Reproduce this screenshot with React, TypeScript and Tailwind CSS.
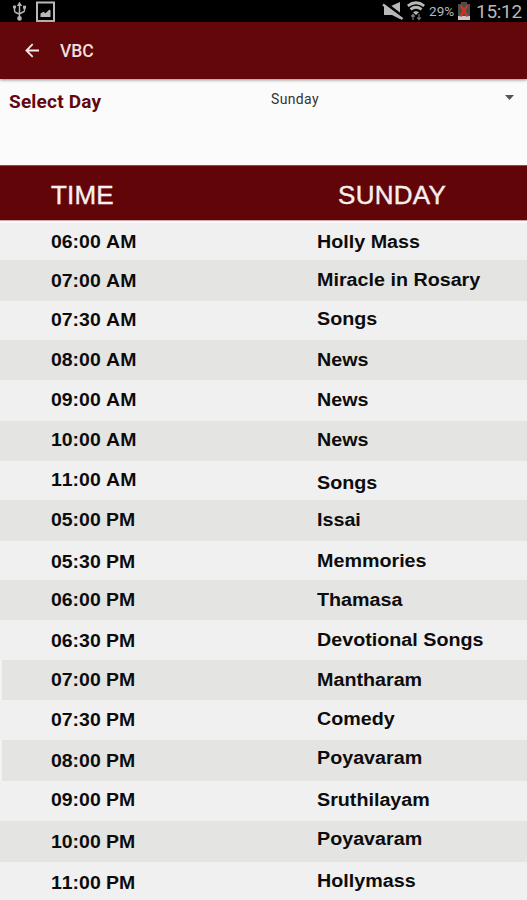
import React from 'react';

interface Programme {
  time: string;
  show: string;
  // row height and text offsets from the top of the row
  height: number;
  timeTop: number;
  showTop: number;
  inset?: boolean;
}

const programmes: Programme[] = [
  { time: '06:00 AM', show: 'Holly Mass', height: 37, timeTop: 10, showTop: 10 },
  { time: '07:00 AM', show: 'Miracle in Rosary', height: 41, timeTop: 12, showTop: 11 },
  { time: '07:30 AM', show: 'Songs', height: 39, timeTop: 10, showTop: 9 },
  { time: '08:00 AM', show: 'News', height: 40, timeTop: 11, showTop: 11 },
  { time: '09:00 AM', show: 'News', height: 41, timeTop: 11, showTop: 11 },
  { time: '10:00 AM', show: 'News', height: 40, timeTop: 10, showTop: 10 },
  { time: '11:00 AM', show: 'Songs', height: 39, timeTop: 10, showTop: 13 },
  { time: '05:00 PM', show: 'Issai', height: 41, timeTop: 11, showTop: 11 },
  { time: '05:30 PM', show: 'Memmories', height: 39, timeTop: 12, showTop: 11 },
  { time: '06:00 PM', show: 'Thamasa', height: 40, timeTop: 11, showTop: 11 },
  { time: '06:30 PM', show: 'Devotional Songs', height: 40, timeTop: 12, showTop: 11 },
  { time: '07:00 PM', show: 'Mantharam', height: 40, timeTop: 11, showTop: 11, inset: true },
  { time: '07:30 PM', show: 'Comedy', height: 40, timeTop: 11, showTop: 10 },
  { time: '08:00 PM', show: 'Poyavaram', height: 41, timeTop: 12, showTop: 9, inset: true },
  { time: '09:00 PM', show: 'Sruthilayam', height: 40, timeTop: 10, showTop: 10 },
  { time: '10:00 PM', show: 'Poyavaram', height: 41, timeTop: 12, showTop: 9 },
  { time: '11:00 PM', show: 'Hollymass', height: 38, timeTop: 12, showTop: 10 },
];

const StatusBar = () => (
  <div className="flex h-[22px] items-center justify-between bg-black pr-[5px] pl-3">
    <div className="flex items-center gap-[9px]">
      <svg width="15" height="20" viewBox="0 0 15 20" fill="none" stroke="#b4b4b4" strokeWidth="1.5">
        <path d="M7.5 3v14M2.5 6.5v3.2q0 1.3 1.3 1.8l3.7 1.7M12.5 7v2.2q0 1.3-1.3 1.8l-3.7 1.7" />
        <path d="M7.5 0.8L4.8 5h5.4z" fill="#b4b4b4" stroke="none" />
        <circle cx="7.5" cy="17.4" r="2.3" fill="#b4b4b4" stroke="none" />
        <circle cx="2.5" cy="6" r="1.7" fill="#b4b4b4" stroke="none" />
        <path d="M11 4.7h3v3h-3z" fill="#b4b4b4" stroke="none" />
      </svg>
      <svg width="19" height="21" viewBox="0 0 19 21">
        <rect x="1" y="1.5" width="17" height="18.5" fill="none" stroke="#b9b9b9" strokeWidth="2" />
        <path d="M4.5 16v-3.5l3-1.8 2 1.5 4-3.7 1 1V16z" fill="#b9b9b9" />
      </svg>
    </div>
    <div className="flex items-center font-[Roboto,sans-serif] text-[#b8b8b8]">
      <svg width="22" height="20" viewBox="0 0 22 20">
        <path d="M2 5h7l9-4v17l-8-4H2z" fill="#b9b9b9" />
        <path d="M2 2l18 14" stroke="#000" strokeWidth="4.5" />
        <path d="M1 3.5l19.5 14.5" stroke="#b9b9b9" strokeWidth="2.2" />
      </svg>
      <svg className="ml-[3px]" width="18" height="20" viewBox="0 0 18 20" fill="none" stroke="#b9b9b9" strokeWidth="2.8">
        <path d="M0.8 4.8q8.2-6 16.4 0" />
        <path d="M3.5 8.4q5.5-4.2 11 0" />
        <path d="M6 11.3q3-2.2 6 0L9 14z" fill="#b9b9b9" stroke="none" />
        <path d="M6 19v-5M4.2 15.5L6 13.5l1.8 2M12 13v5M10.2 16.5l1.8 2 1.8-2" stroke="#777" strokeWidth="1.2" />
      </svg>
      <span className="ml-[4px] w-[28px] pt-[2px] text-[13.5px] leading-none tracking-[0.1px] whitespace-nowrap">29%</span>
      <svg width="14" height="20" viewBox="0 0 14 20">
        <path d="M4 1h6v2h3v16H1V3h3z" fill="#4c4c4c" />
        <path d="M1 15h12v4H1z" fill="#c8c8c8" />
        <path d="M3.5 4.5l7 11M10.5 4.5l-7 11" stroke="#d6331c" strokeWidth="2.2" />
      </svg>
      <span className="ml-[5px] w-[46px] text-[19px] leading-none tracking-[-0.3px]">15:12</span>
    </div>
  </div>
);

const AppBar = () => (
  <header className="relative z-10 flex h-[57px] items-center bg-[#63070b] pl-[25px] shadow-[0_1px_3px_rgba(0,0,0,0.45)]">
    <svg width="15" height="15" viewBox="0 0 15 15" fill="none" stroke="#f5eaea" strokeWidth="1.8">
      <path d="M14 7.5H1.6M7.7 1.2L1.4 7.5l6.3 6.3" />
    </svg>
    <h1 className="ml-5 pt-px font-[Roboto,sans-serif] text-[17.5px] font-medium text-[#f0dfdf]">VBC</h1>
  </header>
);

const DayPicker = () => (
  <div className="flex h-[86px] items-start bg-[#fbfbfb] font-[Roboto,sans-serif]">
    <label className="w-[271px] pt-[12px] pl-[9px] text-[19px] leading-[22px] font-bold tracking-[0.2px] text-[#63070f]">
      Select Day
    </label>
    <button className="flex flex-1 items-start justify-between pt-[11px] pr-[13px] text-[14px] leading-[18px] tracking-[0.35px] text-[#333]">
      Sunday
      <svg className="mt-[5px]" width="9" height="5" viewBox="0 0 9 5">
        <path d="M0 0h9L4.5 5z" fill="#555" />
      </svg>
    </button>
  </div>
);

const ProgrammeRow = ({ item, striped }: { item: Programme; striped: boolean }) => (
  <div
    className={`flex text-[18px] leading-[18px] font-bold text-[#0c0c0c] ${striped ? 'bg-[#e4e4e2]' : 'bg-[#f0f0f0]'} ${item.inset ? 'border-l-2 border-[#f3f3f3] pl-[48.5px]' : 'pl-[50.5px]'}`}
    style={{ height: item.height }}
  >
    <div className="w-[266px]" style={{ paddingTop: item.timeTop }}>
      <span className="inline-block origin-left scale-x-[1.08] whitespace-nowrap [font-kerning:none]">{item.time}</span>
    </div>
    <div style={{ paddingTop: item.showTop }}>
      <span className="inline-block origin-left scale-x-[1.095] whitespace-nowrap">{item.show}</span>
    </div>
  </div>
);

const App: React.FC = () => {
  return (
    <div className="h-[900px] w-[527px] overflow-hidden bg-[#f0f0f0]">
      <StatusBar />
      <AppBar />
      <DayPicker />
      <main className="font-['Liberation_Sans',Arial,sans-serif]">
        <div className="flex h-[55px] items-center border-t border-[#8c4a4c] bg-[#610508] pt-[4px] pl-[51px] text-[26px] leading-none text-[#f8eeee] [-webkit-text-stroke:0.4px_#f8eeee]">
          <span className="w-[287px] tracking-[0.2px]">TIME</span>
          <span className="tracking-[0.3px]">SUNDAY</span>
        </div>
        <div className="h-[3px] border-t border-[#d3a5a8] bg-[#fafafa]" />
        {programmes.map((item, index) => (
          <ProgrammeRow key={item.time} item={item} striped={index % 2 === 1} />
        ))}
      </main>
    </div>
  );
};

export default App;
